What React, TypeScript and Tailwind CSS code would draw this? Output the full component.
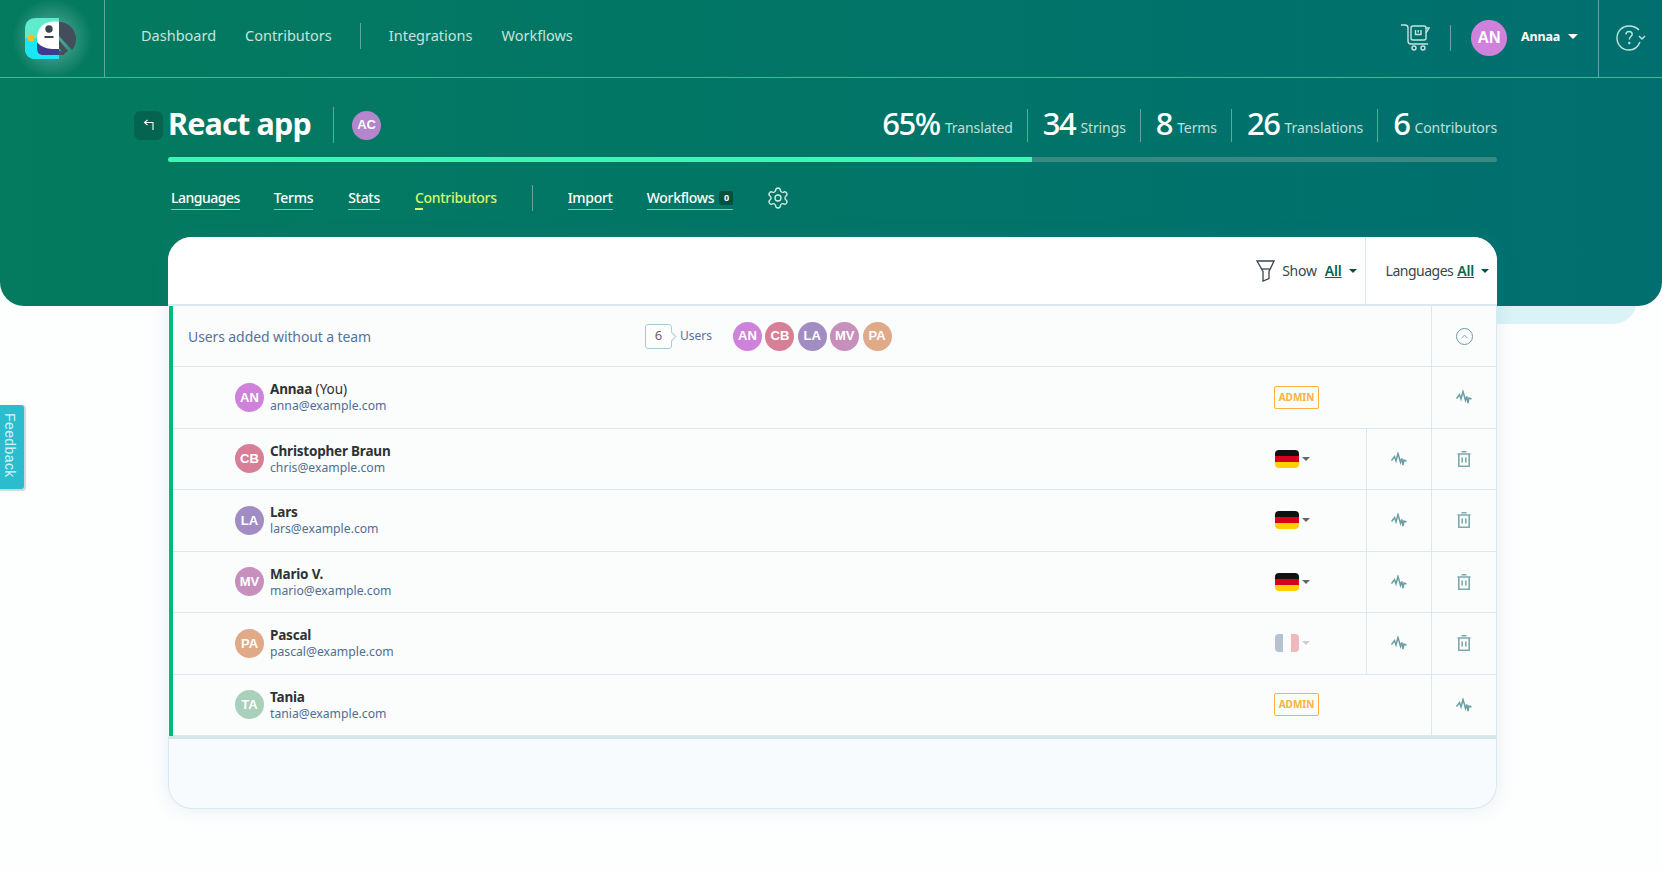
import React from "react";
import { ChevronUp, Settings } from "lucide-react";

type Member = {
  initials: string;
  color: string;
  name: string;
  you?: boolean;
  email: string;
  role: "admin" | "de" | "fr";
};

const members: Member[] = [
  { initials: "AN", color: "bg-[#cf82dc]", name: "Annaa", you: true, email: "anna@example.com", role: "admin" },
  { initials: "CB", color: "bg-[#d87f98]", name: "Christopher Braun", email: "chris@example.com", role: "de" },
  { initials: "LA", color: "bg-[#a28cc4]", name: "Lars", email: "lars@example.com", role: "de" },
  { initials: "MV", color: "bg-[#c78fbc]", name: "Mario V.", email: "mario@example.com", role: "de" },
  { initials: "PA", color: "bg-[#e0a987]", name: "Pascal", email: "pascal@example.com", role: "fr" },
  { initials: "TA", color: "bg-[#a9d0bb]", name: "Tania", email: "tania@example.com", role: "admin" },
];

const stats = [
  { value: "65%", label: "Translated" },
  { value: "34", label: "Strings" },
  { value: "8", label: "Terms" },
  { value: "26", label: "Translations" },
  { value: "6", label: "Contributors" },
];

const Caret = ({ className }: { className: string }) => (
  <span className={`inline-block h-0 w-0 border-x-[4px] border-t-[4px] border-x-transparent ${className}`} />
);

const Avatar = ({ initials, color, size = "small" }: { initials: string; color: string; size?: "small" | "large" }) => (
  <div
    className={`flex shrink-0 items-center justify-center rounded-full font-['Liberation_Sans',sans-serif] font-bold text-white ${color} ${
      size === "large" ? "h-9 w-9 text-[16px]" : "h-[29px] w-[29px] text-[13px]"
    }`}>
    {initials}
  </div>
);

const Logo = () => (
  <svg width="52" height="42" viewBox="0 0 52 42">
    <path d="M11 0H34V41H11C4 41 0 37 0 30V11C0 4 4 0 11 0Z" fill="#5eeccd" />
    <path d="M0 20H34V41H11C4 41 0 37 0 30Z" fill="#1be6f5" />
    <path d="M34 4C25 2 12 6 12 20V30C12 35 14 37 18 37H34Z" fill="#fff" />
    <path d="M12 30C12 35 14 37 18 37H34V31C26 31 17 31 12 24Z" fill="#3a3d8f" />
    <circle cx="6" cy="20" r="3.5" fill="#f5bd1f" />
    <circle cx="24" cy="11" r="3.7" fill="#3b4452" />
    <rect x="19.5" y="18" width="9" height="2" fill="#3b4452" />
    <path d="M34 4C43 4 51 11 51 21C51 25 50 28 47 32L34 18Z" fill="#434d5c" />
    <path d="M34 22L43 33L39 36L34 30Z" fill="#434d5c" />
    <path d="M34 33V37H38C41 37 39 33 34 33Z" fill="#434d5c" />
  </svg>
);

const CartIcon = () => (
  <svg width="30" height="27" viewBox="0 0 30 27" fill="none" stroke="#c5e4df" strokeWidth="1.4">
    <path d="M1 1H5C7 1 8 2 8 4V17C8 19 9 20 11 20H28" />
    <rect x="11" y="2" width="15" height="14" rx="2" />
    <path d="M26 4H29L26 9" />
    <path d="M15.5 6V10.5H21V6M18.2 6V8.5" />
    <circle cx="14" cy="24" r="2" />
    <circle cx="23" cy="24" r="2" />
  </svg>
);

const HelpIcon = () => (
  <svg width="30" height="26" viewBox="0 0 30 26" fill="none" stroke="#c5e4df" strokeWidth="1.4">
    <path d="M23 5C20.5 2.5 17.5 1 13 1C6 1 1 6.5 1 13C1 19.5 6 25 13 25C18 25 22 22 24 17" />
    <path d="M10 9.5C10 7.5 11.5 6.5 13 6.5C15 6.5 16.2 7.7 16.2 9.3C16.2 11.5 13.3 11.8 13.3 14.5" />
    <circle cx="13.3" cy="18" r="0.5" fill="#c5e4df" />
    <path d="M23 11L26 14L29 11" />
  </svg>
);

const BackIcon = () => (
  <svg width="12" height="12" viewBox="0 0 12 12" fill="none" stroke="#fff" strokeWidth="1.1">
    <path d="M10 11V3.5H1.5M4.5 0.8L1.5 3.5L4.5 6.2" />
  </svg>
);

const FilterIcon = () => (
  <svg width="19" height="22" viewBox="0 0 19 22" fill="none" stroke="#37474f" strokeWidth="1.3">
    <path d="M1 1H18L13 11.5V18.5L7 21V11.5Z" />
    <path d="M5.5 9H13.8" />
  </svg>
);

const ActivityIcon = () => (
  <svg width="16" height="14" viewBox="0 0 16 14" fill="none" stroke="#6a9ea3" strokeWidth="1.5">
    <path d="M0.5 8.5L3.5 4.5L5 9L7 1.5L9.5 10.5L10.8 6.5L12 13L13 8L15.5 9" />
  </svg>
);

const TrashIcon = () => (
  <svg width="14" height="16" viewBox="0 0 14 16" fill="none" stroke="#7ea9ad" strokeWidth="1.6">
    <path d="M0.5 3H13.5M4.5 0.8H9.5M1.8 3V15.2H12.2V3M5.2 6.5V11.5M8.8 6.5V11.5" />
  </svg>
);

const Flag = ({ role }: { role: "de" | "fr" }) =>
  role === "de" ? (
    <div className="ml-px flex items-center gap-[3px]">
      <div className="flex h-[18px] w-[24px] flex-col overflow-hidden rounded-[4px]">
        <div className="flex-1 bg-[#111]" />
        <div className="flex-1 bg-[#d8001a]" />
        <div className="flex-1 bg-[#ffd000]" />
      </div>
      <Caret className="border-t-[#666]" />
    </div>
  ) : (
    <div className="ml-px flex items-center gap-[3px] opacity-30">
      <div className="flex h-[18px] w-[24px] overflow-hidden rounded-[4px]">
        <div className="flex-1 bg-[#1f3f6e]" />
        <div className="flex-1 bg-white" />
        <div className="flex-1 bg-[#d8202c]" />
      </div>
      <Caret className="border-t-[#666]" />
    </div>
  );

const MemberRow = ({ member }: { member: Member }) => (
  <div className="flex h-[61.5px] items-stretch border-b border-[#d8e9f0]">
    <div className="flex flex-1 items-center gap-[6px] pl-[62px]">
      <Avatar initials={member.initials} color={member.color} />
      <div className="flex flex-col pt-px">
        <div className="text-[13.5px] leading-[17px] text-[#2d3236]">
          <span className="font-bold tracking-[-0.2px]">{member.name}</span>
          {member.you && <span> (You)</span>}
        </div>
        <div className="text-[12.2px] leading-[16px] text-[#4f6d94]">{member.email}</div>
      </div>
    </div>
    <div className="flex w-[92px] items-center">
      {member.role === "admin" ? (
        <div className="flex h-[23px] w-[45px] items-center justify-center rounded-[2px] border border-[#fdb13f] text-[10px] font-bold text-[#fdb13f]">
          ADMIN
        </div>
      ) : (
        <Flag role={member.role} />
      )}
    </div>
    {member.role === "admin" ? (
      <div className="w-[65px]" />
    ) : (
      <div className="flex w-[65px] items-center justify-center border-l border-[#d8e9f0]">
        <ActivityIcon />
      </div>
    )}
    <div className="flex w-[65px] items-center justify-center border-l border-[#d8e9f0]">
      {member.role === "admin" ? <ActivityIcon /> : <TrashIcon />}
    </div>
  </div>
);

export default function App() {
  return (
    <div className="relative min-h-[870px] bg-[#fdfefe] font-['Noto_Sans',sans-serif]">
      <div className="absolute right-[25px] top-[280px] h-[44px] w-[300px] rounded-b-[24px] bg-[#d9f3f7]" />

      <div className="relative h-[306px] rounded-b-[24px] bg-gradient-to-r from-[#047a5e] to-[#016f6f]">
        <header className="flex h-[78px] items-stretch border-b border-[#5fa79b]">
          <div className="flex w-[105px] items-center justify-center border-r border-[#5fa79b] bg-[radial-gradient(circle_at_50%_50%,#5fb09e_0%,transparent_62%)] pr-[2px]">
            <Logo />
          </div>
          <nav className="flex items-center pb-[6px] pl-[36px] text-[14.5px] text-[#c6e4dd]">
            <span>Dashboard</span>
            <span className="ml-[29px]">Contributors</span>
            <span className="mx-[28px] h-[26px] w-px bg-[#5fa79b]" />
            <span>Integrations</span>
            <span className="ml-[29px]">Workflows</span>
          </nav>
          <div className="ml-auto flex items-center pb-[2px]">
            <CartIcon />
            <span className="ml-[20px] h-[26px] w-px bg-[#5fa79b]" />
            <div className="ml-[20px]">
              <Avatar initials="AN" color="bg-[#cf82dc]" size="large" />
            </div>
            <span className="ml-[14px] text-[12.5px] font-bold tracking-[-0.2px] text-white">Annaa</span>
            <Caret className="ml-[8px] mb-[2px] border-x-[5px] border-t-[5px] border-t-white" />
          </div>
          <div className="ml-[20px] flex w-[64px] items-center justify-center border-l border-[#5fa79b] pb-[2px]">
            <HelpIcon />
          </div>
        </header>

        <div className="pl-[134px] pr-[165px]">
          <div className="mt-[29px] flex h-[36px] items-center">
            <div className="flex h-[29px] w-[29px] items-center justify-center rounded-[7px] bg-[#05644f]">
              <BackIcon />
            </div>
            <h1 className="ml-[5px] pb-[3px] text-[30.5px] font-bold leading-none tracking-[-0.8px] text-white">React app</h1>
            <span className="ml-[22px] h-[36px] w-px bg-[#5fa79b]" />
            <div className="ml-[18px]">
              <Avatar initials="AC" color="bg-[#b585cd]" />
            </div>
            <div className="ml-auto flex items-center">
              {stats.map((stat, i) => (
                <div
                  key={stat.label}
                  className={`flex h-[33px] items-center gap-[5px] ${i > 0 ? "ml-[14px] border-l border-[#5fa79b] pl-[15px]" : ""}`}>
                  <span className="mb-[3px] text-[31px] font-medium leading-none tracking-[-1.4px] text-white">{stat.value}</span>
                  <span className="mt-[6px] text-[14px] leading-none tracking-[-0.1px] text-[#bfe0da]">{stat.label}</span>
                </div>
              ))}
            </div>
          </div>

          <div className="ml-[34px] mt-[14px] h-[5px] overflow-hidden rounded-full bg-[#3a8a84]">
            <div className="h-full w-[65%] bg-[#3ff5b5]" />
          </div>

          <div className="ml-[37px] mt-[23px] flex h-[26px] items-center text-[14px] font-medium tracking-[-0.3px] text-white">
            <span className="border-b border-[#8cc2b8] leading-[22px] tracking-[-0.5px]">Languages</span>
            <span className="ml-[34px] border-b border-[#8cc2b8] leading-[22px]">Terms</span>
            <span className="ml-[35px] border-b border-[#8cc2b8] leading-[22px]">Stats</span>
            <span className="relative ml-[35px] border-b border-transparent leading-[22px] text-[#d8f76f]">
              Contributors
              <span className="absolute bottom-[-1px] left-0 h-[2px] w-[8px] bg-[#d8f76f]" />
            </span>
            <span className="mx-[35px] h-[26px] w-px bg-[#5fa79b]" />
            <span className="border-b border-[#8cc2b8] leading-[22px]">Import</span>
            <span className="ml-[34px] flex items-center gap-[5px] border-b border-[#8cc2b8] leading-[22px]">
              Workflows
              <span className="flex h-[14px] w-[14px] items-center justify-center rounded-[2px] bg-[#05503f] text-[9px] font-bold leading-none">
                0
              </span>
            </span>
            <Settings className="ml-[33px] h-[24px] w-[24px] text-[#d8efe9]" strokeWidth={1.3} />
          </div>
        </div>
      </div>

      <main className="relative -mt-[69px] ml-[168px] w-[1329px] rounded-[24px] bg-[#f8fbfd] shadow-[0_0_18px_rgba(90,140,170,0.14)]">
        <div className="flex h-[69px] items-center justify-end rounded-t-[24px] border-b-2 border-[#d8e9f0] bg-white text-[14px] tracking-[-0.2px] text-[#37474f]">
          <FilterIcon />
          <span className="ml-[7px]">Show</span>
          <span className="ml-[8px] font-semibold text-[#05644f] underline">All</span>
          <Caret className="ml-[7px] border-t-[#05503f]" />
          <span className="ml-[8px] h-full w-px bg-[#d8e9f0]" />
          <span className="ml-[20px] tracking-[-0.5px]">Languages</span>
          <span className="ml-[4px] font-semibold text-[#05644f] underline">All</span>
          <Caret className="ml-[7px] mr-[8px] border-t-[#05503f]" />
        </div>

        <div className="ml-px border-l-[4px] border-r border-l-[#00ba7c] border-r-[#d8e9f0] bg-[#fbfcfc]">
          <div className="flex h-[61px] items-center border-b border-[#d8e9f0]">
            <div className="w-[472px] pl-[15px] text-[14px] tracking-[-0.1px] text-[#56739c]">Users added without a team</div>
            <div className="relative flex h-[25px] w-[27px] items-center justify-center rounded-[3px] border border-[#a9cdd8] bg-white text-[13px] text-[#666]">
              6
              <span className="absolute -right-[4px] top-[8px] h-[7px] w-[7px] rotate-45 border-r border-t border-[#a9cdd8] bg-white" />
            </div>
            <span className="ml-[8px] text-[12px] text-[#56739c]">Users</span>
            <div className="ml-[21px] flex gap-[3.4px]">
              {members.slice(0, 5).map((m) => (
                <Avatar key={m.initials} initials={m.initials} color={m.color} />
              ))}
            </div>
            <div className="ml-auto flex h-full w-[65px] items-center justify-center border-l border-[#d8e9f0]">
              <div className="flex h-[17px] w-[17px] items-center justify-center rounded-full border border-[#6a9ea3]">
                <ChevronUp className="h-[11px] w-[11px] text-[#6a9ea3]" strokeWidth={2} />
              </div>
            </div>
          </div>
          {members.map((m) => (
            <MemberRow key={m.initials} member={m} />
          ))}
        </div>

        <div className="h-[73px] rounded-b-[24px] border border-t-[3px] border-[#d8e9f0] border-t-[#d5e6ea]" />
      </main>

      <div className="absolute left-0 top-[405px] flex h-[84px] w-[24px] items-center justify-center rounded-r-[3px] bg-[#2bbccd] pb-[3px] pr-[6px] font-['Liberation_Sans',sans-serif] text-[14px] tracking-[0.4px] text-[#d7f3f7] shadow-[1px_1px_1px_1px_#cfd9db] [writing-mode:vertical-rl]">
        Feedback
      </div>
    </div>
  );
}
